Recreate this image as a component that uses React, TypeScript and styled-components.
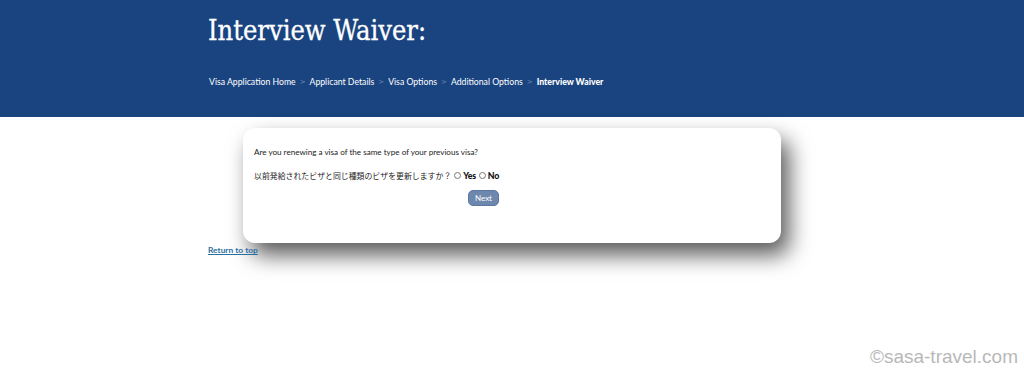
import React from 'react'
import styled, { createGlobalStyle } from 'styled-components'

const GlobalStyle = createGlobalStyle`
  html, body {
    margin: 0;
    padding: 0;
    background: #fff;
  }
  body {
    font-family: Lato, "Noto Sans CJK JP", sans-serif;
  }
`

const Page = styled.div`
  position: relative;
  height: 371px;
  overflow: hidden;
`

const Header = styled.header`
  background: #1a4480;
  height: 117px;
`

const Inner = styled.div`
  width: 608px;
  margin: 0 auto;
`

const Title = styled.h1`
  margin: 0;
  padding-top: 13px;
  font-family: "DejaVu Serif", "Liberation Serif", serif;
  font-stretch: condensed;
  font-weight: normal;
  font-size: 27px;
  line-height: 36px;
  color: #fff;
  -webkit-text-stroke: 0.3px #fff;
`

const Crumbs = styled.nav`
  display: flex;
  align-items: center;
  margin-top: 27px;
  padding-left: 1px;
  font-family: Lato, sans-serif;
  font-size: 8.7px;
  color: #fff;
`

const Crumb = styled.span<{ $current?: boolean }>`
  font-weight: ${(p) => (p.$current ? 900 : 400)};
`

const Sep = styled.span`
  color: #6f89b3;
  margin: 0 4px;
  font-family: "DejaVu Sans", sans-serif;
  font-size: 7px;
`

const Card = styled.div`
  margin: 11px 0 0 35px;
  width: 538px;
  height: 115px;
  box-sizing: border-box;
  padding: 18px 11px 0;
  background: #fff;
  border-radius: 12px;
  box-shadow: 8px 12px 22px rgba(0, 0, 0, 0.65);
  font-family: Lato, "Noto Sans CJK JP", sans-serif;
  font-size: 8.1px;
  color: #222;
`

const Question = styled.p`
  margin: 0;
  line-height: 13px;
`

const Row = styled.div`
  display: flex;
  align-items: center;
  margin-top: 10px;
  line-height: 13px;
`

const Japanese = styled.span`
  font-family: "Noto Sans CJK JP", sans-serif;
  font-size: 7.9px;
`

const Option = styled.label`
  display: inline-flex;
  align-items: center;
  font-size: 8.8px;
  font-weight: 900;
  letter-spacing: -0.3px;
  color: #111;
`

const Radio = styled.span`
  display: inline-block;
  box-sizing: border-box;
  width: 7px;
  height: 7px;
  border: 1px solid #777;
  border-radius: 50%;
  margin: 0 2px 0 3px;
`

const Actions = styled.div`
  display: flex;
  margin: 8px 0 0 214px;
`

const Button = styled.button`
  width: 31px;
  height: 16px;
  padding: 0;
  border: 1px solid #5c78a0;
  border-radius: 5px;
  background: #6e88ad;
  color: #fff;
  font-family: Lato, sans-serif;
  font-size: 8px;
`

const TopLink = styled.a`
  display: block;
  width: fit-content;
  margin-top: 2px;
  font-family: Lato, sans-serif;
  font-size: 8.4px;
  line-height: 10px;
  font-weight: 700;
  color: #2a6f9f;
  text-decoration: underline;
`

const Watermark = styled.div`
  position: absolute;
  right: 6px;
  bottom: 3px;
  font-family: "Liberation Sans", Arial, sans-serif;
  font-size: 19px;
  color: #b8b8b8;
`

const crumbs = ['Visa Application Home', 'Applicant Details', 'Visa Options', 'Additional Options']

export default function App() {
  return (
    <Page>
      <GlobalStyle />
      <Header>
        <Inner>
          <Title>Interview Waiver:</Title>
          <Crumbs>
            {crumbs.map((c) => (
              <React.Fragment key={c}>
                <Crumb>{c}</Crumb>
                <Sep>&gt;</Sep>
              </React.Fragment>
            ))}
            <Crumb $current>Interview Waiver</Crumb>
          </Crumbs>
        </Inner>
      </Header>
      <Inner>
        <Card>
          <Question>Are you renewing a visa of the same type of your previous visa?</Question>
          <Row>
            <Japanese>以前発給されたビザと同じ種類のビザを更新しますか？</Japanese>
            <Option>
              <Radio />Yes
            </Option>
            <Option>
              <Radio />No
            </Option>
          </Row>
          <Actions>
            <Button>Next</Button>
          </Actions>
        </Card>
        <TopLink href="#">Return to top</TopLink>
      </Inner>
      <Watermark>©sasa-travel.com</Watermark>
    </Page>
  )
}
